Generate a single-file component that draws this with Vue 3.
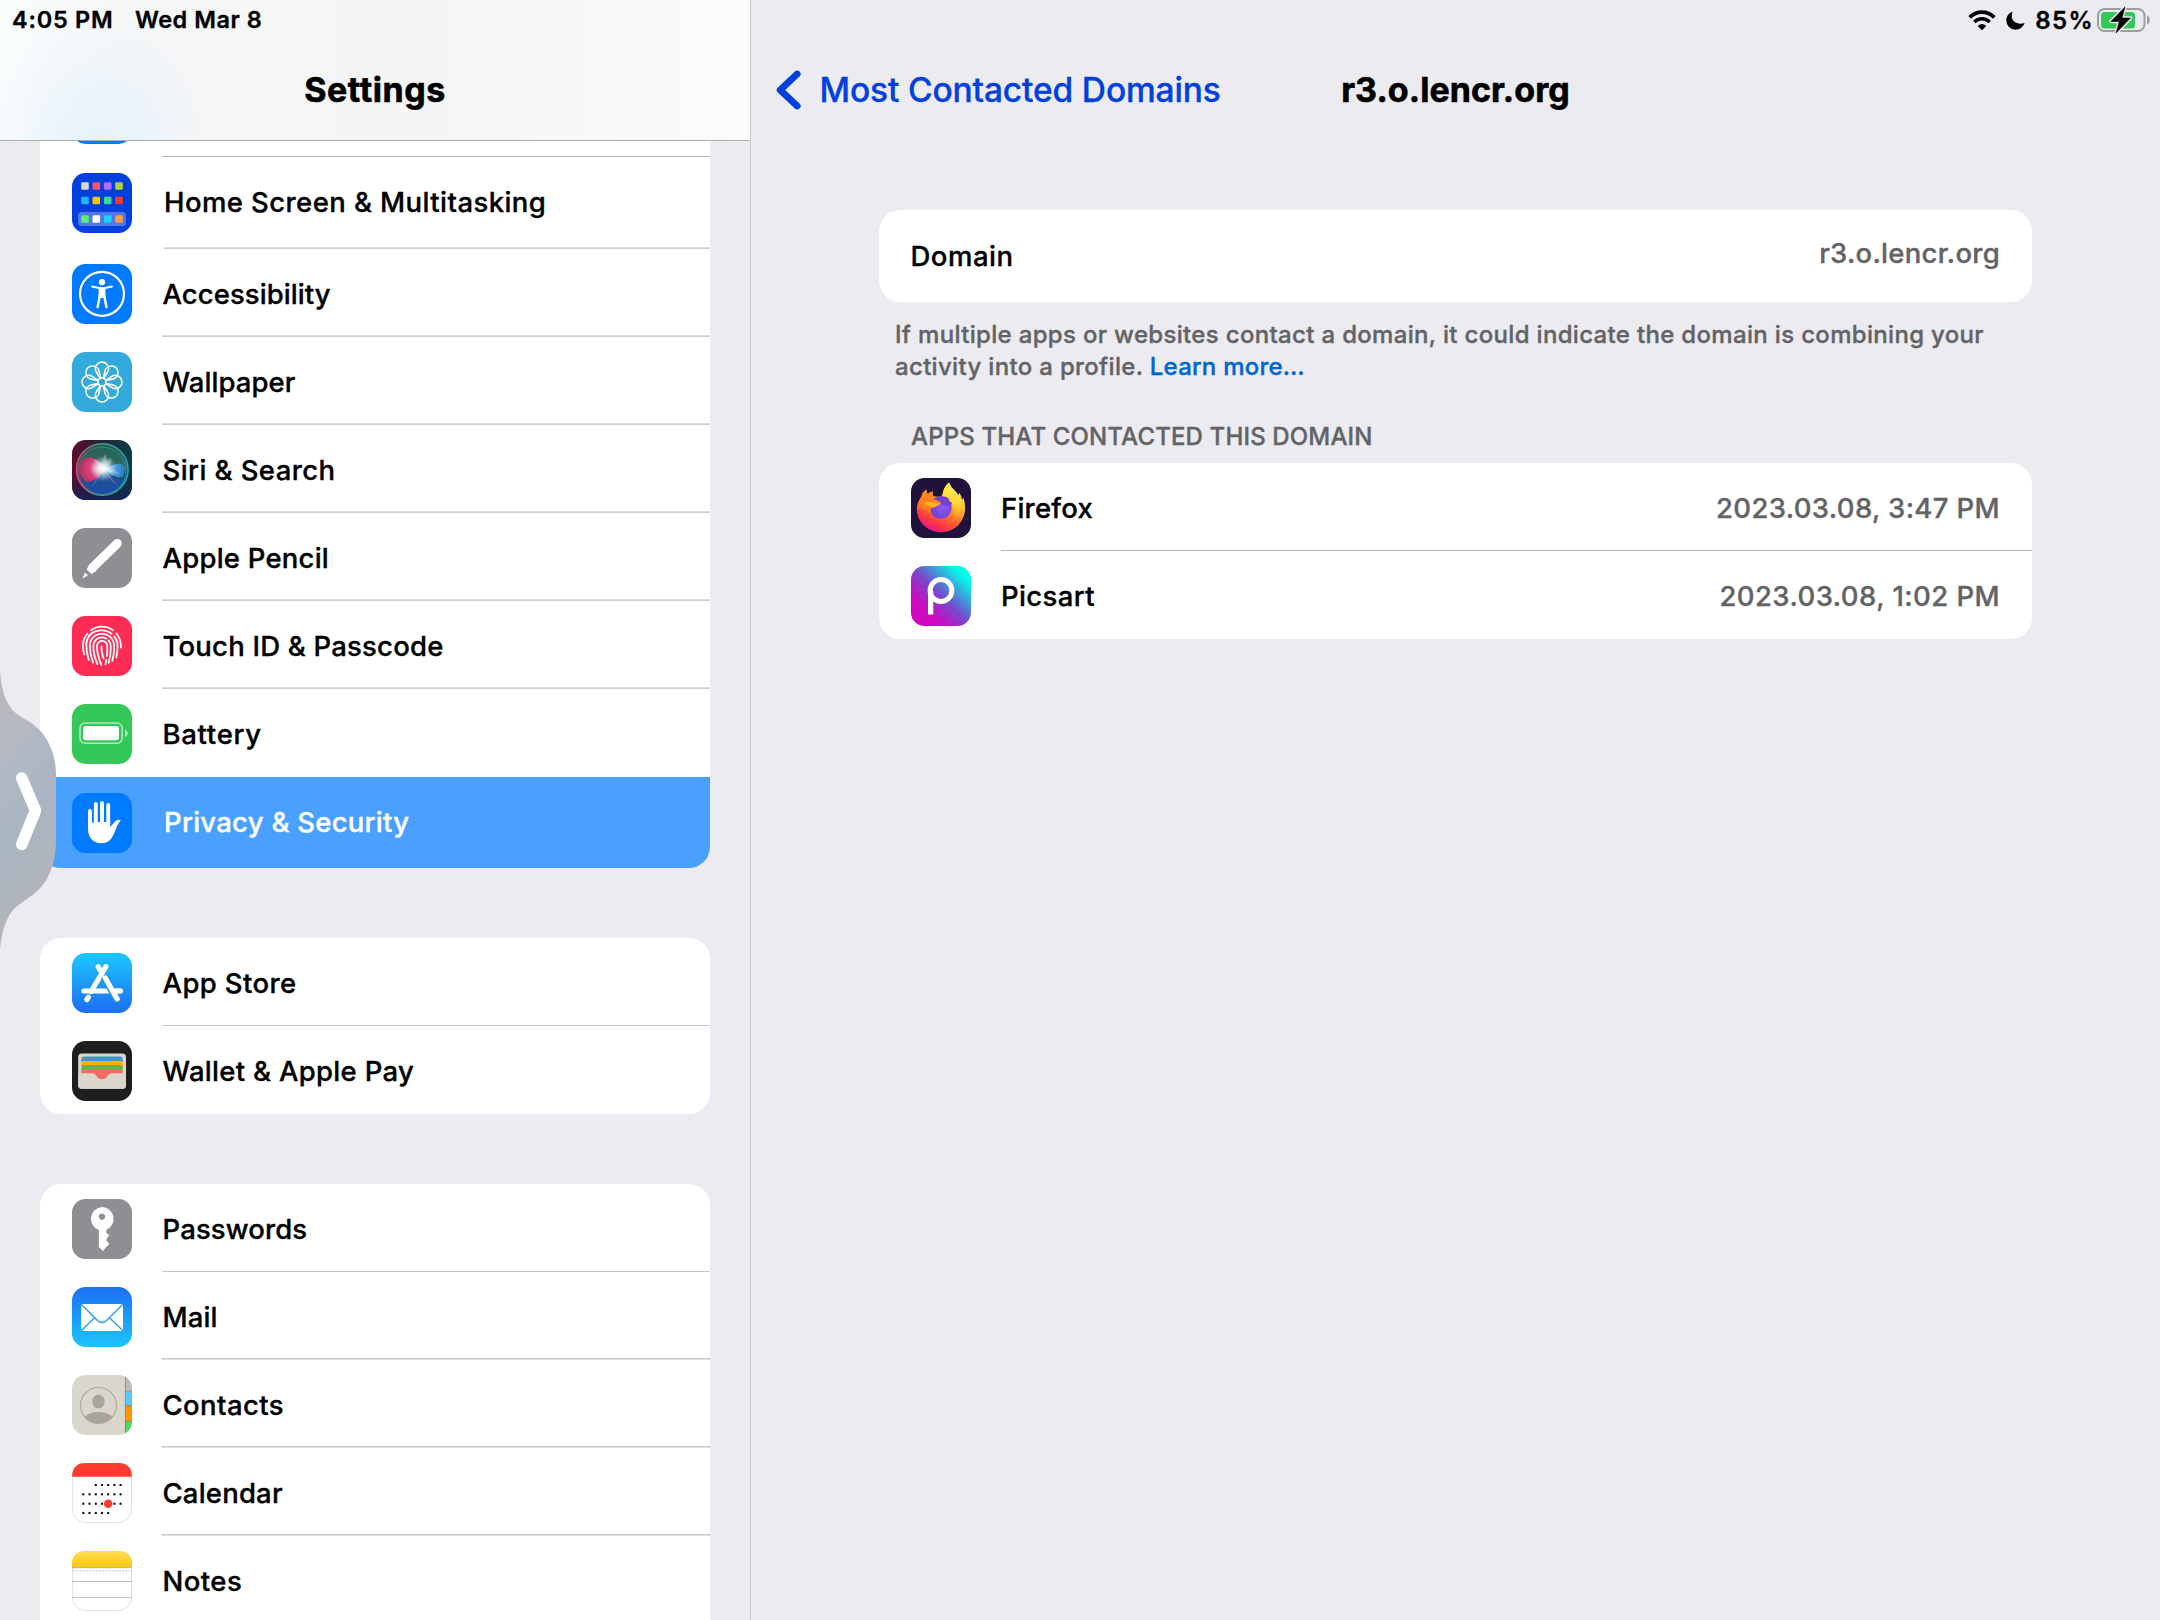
<script setup>
const groups = [
  {
    kind: 'device',
    rows: [
      { icon: 'plain', label: '' },
      { icon: 'home', label: 'Home Screen & Multitasking', track: 0.42, size: 'tall' },
      { icon: 'access', label: 'Accessibility', track: 0.07 },
      { icon: 'wallpaper', label: 'Wallpaper', track: 0.08 },
      { icon: 'siri', label: 'Siri & Search', track: 0.42 },
      { icon: 'pencil', label: 'Apple Pencil', track: 0.22 },
      { icon: 'touch', label: 'Touch ID & Passcode', track: 0.21 },
      { icon: 'battery', label: 'Battery', track: 0.7 },
      { icon: 'hand', label: 'Privacy & Security', track: 0.26, size: 'selected' },
    ],
  },
  {
    kind: 'store',
    rows: [
      { icon: 'appstore', label: 'App Store', track: 0.38 },
      { icon: 'wallet', label: 'Wallet & Apple Pay', track: 0.3 },
    ],
  },
  {
    kind: 'apps',
    rows: [
      { icon: 'key', label: 'Passwords', track: 0.12 },
      { icon: 'mail', label: 'Mail', track: 0.1 },
      { icon: 'contacts', label: 'Contacts', track: 0.42 },
      { icon: 'calendar', label: 'Calendar', track: 0.2 },
      { icon: 'notes', label: 'Notes', track: 0.45 },
    ],
  },
]

const apps = [
  { icon: 'firefox', name: 'Firefox', time: '2023.03.08, 3:47 PM', track: 0.22, timeTrack: 0.36 },
  { icon: 'picsart', name: 'Picsart', time: '2023.03.08, 1:02 PM', track: 0.38, timeTrack: 0.44 },
]

const homeTiles = [
  ['#d9d7cf', 13, 13], ['#ff4f6a', 24.3, 13], ['#b56cff', 35.7, 13], ['#b4d334', 47, 13],
  ['#1cb8fb', 13, 27.5], ['#ffc400', 24.3, 27.5], ['#3ed8a4', 35.7, 27.5], ['#ff372c', 47, 27.5],
  ['#57ef76', 13, 46], ['#ffffff', 24.3, 46], ['#1ad0ff', 35.7, 46], ['#ff9a45', 47, 46],
]

const calendarDots = []
const dotX = [11.3, 17.5, 23.8, 30, 36.2, 42.4, 48.6]
;[[22, 2, 7], [31.3, 0, 7], [40.7, 0, 7], [50, 0, 5]].forEach(([y, from, to]) => {
  for (let i = from; i < to; i++) calendarDots.push([dotX[i], y])
})
</script>

<template>
  <div class="screen">
    <aside class="sidebar">
      <header class="side-head">
        <div class="status-left"><span class="clock">4:05 PM</span><span class="date">Wed Mar 8</span></div>
        <h1 class="side-title">Settings</h1>
      </header>

      <nav class="side-list">
        <ul v-for="g in groups" :key="g.kind" class="group" :class="g.kind">
          <li v-for="r in g.rows" :key="r.icon" class="row" :class="r.size">
            <svg class="icon" viewBox="0 0 60 60">
              <g v-if="r.icon === 'plain'"><rect width="60" height="60" rx="13.5" fill="#007aff" /></g>

              <g v-else-if="r.icon === 'home'">
                <rect width="60" height="60" rx="13.5" fill="#0040dd" />
                <rect x="6" y="39" width="48" height="14" rx="3.5" fill="#5079e7" />
                <rect v-for="t in homeTiles" :key="t.join()" :x="t[1] - 3.8" :y="t[2] - 3.8" width="7.6" height="7.6" rx="1.3" :fill="t[0]" />
              </g>

              <g v-else-if="r.icon === 'access'">
                <rect width="60" height="60" rx="13.5" fill="#007aff" />
                <circle cx="30" cy="29.8" r="22" fill="none" stroke="#fff" stroke-width="2.2" />
                <circle cx="30" cy="18.2" r="3.1" fill="#fff" />
                <path d="M20 22.6L27 24h6l7-1.4" fill="none" stroke="#fff" stroke-width="2" stroke-linecap="round" stroke-linejoin="round" />
                <path d="M26.6 23.6h6.8v8.6h-6.8z" fill="#fff" />
                <path d="M27.8 31.5L25.6 43M32.2 31.5L34.4 43" stroke="#fff" stroke-width="2.4" stroke-linecap="round" />
                <path d="M28 30h4l.8 4h-5.6z" fill="#fff" />
              </g>

              <g v-else-if="r.icon === 'wallpaper'" fill="none" stroke="#fff" stroke-width="1.6" stroke-linejoin="round">
                <rect width="60" height="60" rx="13.5" fill="#34aadc" stroke="none" />
                <path v-for="i in 8" :key="i" d="M28.3 26.3L24.6 20.5A6.6 6.6 0 1 1 35.4 20.5L31.7 26.3" :transform="`rotate(${i * 45} 30 30)`" />
                <circle cx="30" cy="30" r="4" />
              </g>

              <g v-else-if="r.icon === 'siri'">
                <defs>
                  <clipPath id="siri-clip"><rect width="60" height="60" rx="13.5" /></clipPath>
                  <linearGradient id="siri-bg" x1="0" y1="0" x2="1" y2="0"><stop offset="0" stop-color="#5c0e2c" /><stop offset=".45" stop-color="#2a2038" /><stop offset="1" stop-color="#0b3c47" /></linearGradient>
                  <linearGradient id="siri-shade" x1="0" y1="0" x2="0" y2="1"><stop offset=".55" stop-color="#101a48" stop-opacity="0" /><stop offset="1" stop-color="#12245a" stop-opacity=".9" /></linearGradient>
                  <linearGradient id="siri-orb" x1="0" y1="0" x2="0" y2="1"><stop offset="0" stop-color="#1d7a5c" /><stop offset=".48" stop-color="#41807b" /><stop offset=".6" stop-color="#245f94" /><stop offset="1" stop-color="#175cc0" /></linearGradient>
                  <linearGradient id="siri-ring" x1="0" y1="0" x2="1" y2="0"><stop offset="0" stop-color="#dc4a79" /><stop offset=".45" stop-color="#4a9c82" /><stop offset="1" stop-color="#24a6b8" /></linearGradient>
                  <radialGradient id="siri-pink" cx=".75" cy=".45" r=".8"><stop offset="0" stop-color="#f0b5cb" /><stop offset=".5" stop-color="#dc3f78" /><stop offset="1" stop-color="#a92f62" /></radialGradient>
                  <linearGradient id="siri-blue" x1="0" y1="0" x2="1" y2="0"><stop offset="0" stop-color="#9fdcff" /><stop offset="1" stop-color="#1b80da" /></linearGradient>
                  <radialGradient id="siri-glow"><stop offset="0" stop-color="#fff" /><stop offset=".25" stop-color="#f4ffff" stop-opacity=".85" /><stop offset="1" stop-color="#bff3ee" stop-opacity="0" /></radialGradient>
                </defs>
                <g clip-path="url(#siri-clip)">
                  <rect width="60" height="60" fill="url(#siri-bg)" />
                  <rect width="60" height="60" fill="url(#siri-shade)" />
                  <circle cx="30.3" cy="29.5" r="25.3" fill="url(#siri-orb)" fill-opacity=".7" />
                  <path d="M8 44Q20 38 31 30 43 40 53 40 47 54 30.3 54.5 16 54 8 44z" fill="#1d56c4" opacity=".3" />
                  <circle cx="30.3" cy="29.5" r="25.8" fill="none" stroke="url(#siri-ring)" stroke-width="1.5" />
                  <circle cx="30.3" cy="30.8" r="23.6" fill="none" stroke="url(#siri-ring)" stroke-width=".7" opacity=".8" />
                  <path d="M34 29C27 19 19 15.5 13 18.5 5.5 23 6 37 13 41 21 44 28 36 34 29z" fill="url(#siri-pink)" />
                  <path d="M31 29C39 27 44 22.5 49 24 54 26 54 35 49 37 43 38 38 33 31 29z" fill="url(#siri-blue)" opacity=".85" />
                  <path d="M32 30L46 46 39 40zM32 30L20 47 23 41z" fill="#c17fd0" opacity=".6" />
                  <circle cx="31.5" cy="28.5" r="13" fill="url(#siri-glow)" />
                  <path d="M33 13L35 21 40 18 37 27 48 34 35 31 31.5 34 28 30 20 29 27 26 21 19 30 23z" fill="#fff" opacity=".25" />
                </g>
              </g>

              <g v-else-if="r.icon === 'pencil'">
                <rect width="60" height="60" rx="13.5" fill="#8e8e93" />
                <path d="M45.3 15.5L21 39.3" stroke="#fff" stroke-width="9" stroke-linecap="round" />
                <path d="M14.6 41.6L19.5 46 24.5 43 17.5 36z" fill="#fff" />
                <path d="M13.2 44.6L10.2 50.2 16 47.5z" fill="#fff" />
              </g>

              <g v-else-if="r.icon === 'touch'" fill="none" stroke="#fff" stroke-width="1.8" stroke-linecap="round">
                <rect width="60" height="60" rx="13.5" fill="#ff2d55" stroke="none" />
                <path d="M19 14.2C25.5 9.3 34.5 9.3 41 14.2" />
                <path d="M15.5 17.5C12 21.5 10.5 26 11 31.5Q11.2 35.5 12.2 38.5" />
                <path d="M44.5 17.5C47.5 21.5 49.2 26 48.9 31.5" />
                <path d="M16.8 44C14.8 38 14.3 33.5 14.3 29 14.3 20 21 14.3 29.5 14.3 33.5 14.3 37 15.6 39.6 17.8" />
                <path d="M42.3 20.5C44.7 23.5 45.7 27 45.6 31Q45.5 36.5 44.3 41.5" />
                <path d="M21 46.5C18.8 40.5 17.8 35 17.8 30 17.8 22.5 23 17.8 29.8 17.8 37 17.8 42.2 23 42.2 30.5Q42.2 38 40.3 44.8" />
                <path d="M25.2 48C22.5 41 21.3 35.5 21.3 30 21.3 25 25 21.4 30 21.4 31.5 21.4 33 21.8 34.2 22.5" />
                <path d="M36.5 24.3C38 26 38.8 28 38.8 30.5Q38.8 39.5 36.7 46.8" />
                <path d="M29.3 48.8C26.3 41.5 25 36 25 30.2 25 27 27.2 25 30.1 25 33.3 25 35.3 27.5 35.3 31Q35.3 36 34.9 40" />
                <path d="M34.3 43.8L33.5 48.3" />
                <path d="M31.5 42.5C30.3 38.5 29.3 34 29.5 30.5" />
              </g>

              <g v-else-if="r.icon === 'battery'">
                <rect width="60" height="60" rx="13.5" fill="#34c759" />
                <rect x="8" y="19" width="42.2" height="20.2" rx="5" fill="none" stroke="#aee9bd" stroke-width="1.6" />
                <rect x="11" y="22" width="36" height="14.3" rx="2.8" fill="#fff" />
                <path d="M53 25.5Q55.7 26.5 55.7 29.2T53 33z" fill="#aee9bd" />
              </g>

              <g v-else-if="r.icon === 'hand'">
                <rect width="60" height="60" rx="13.5" fill="#007aff" />
                <path d="M18 18v16M23.8 11v20M30 10v20M36.2 12v20" stroke="#fff" stroke-width="3.9" stroke-linecap="round" />
                <path d="M16.05 24V37C16.5 45.5 22 50.2 29 50.2 35.5 50.2 39 47.5 42 40.5L45.5 32Q47 29.5 48.9 27.2 46.5 25.8 43.5 28L38.15 34V28L36.5 29h-6.7l-6 0-5 1z" fill="#fff" />
              </g>

              <g v-else-if="r.icon === 'appstore'">
                <defs><linearGradient id="store-bg" x1="0" y1="0" x2="0" y2="1"><stop offset="0" stop-color="#1bc8fd" /><stop offset="1" stop-color="#1e6ef3" /></linearGradient></defs>
                <rect width="60" height="60" rx="13.5" fill="url(#store-bg)" />
                <g fill="none" stroke="#fff" stroke-width="5.2" stroke-linecap="round">
                  <path d="M33.8 13.8L19 38.5M16.3 44.3L14.9 46.5" />
                  <path d="M26.2 13.8L30 20" />
                  <path d="M11.8 38H48.4" stroke-width="5" />
                </g>
                <path d="M32.3 23.5L45 46" stroke="#1d95f8" stroke-width="8" />
                <path d="M33.3 25L45.2 46" stroke="#fff" stroke-width="5.2" stroke-linecap="round" />
                <path d="M42 38H48.4" stroke="#fff" stroke-width="5" stroke-linecap="round" />
              </g>

              <g v-else-if="r.icon === 'wallet'">
                <rect width="60" height="60" rx="13.5" fill="#1e1e1e" />
                <rect x="6.2" y="12.4" width="47.8" height="35.4" rx="3.5" fill="#d9d6cb" />
                <path d="M9.3 21v-3q0-2.5 2.5-2.5h36.4q2.5 0 2.5 2.5v3z" fill="#3c9ac8" />
                <path d="M9.3 25.5v-3q0-2.5 2.5-2.5h36.4q2.5 0 2.5 2.5v3z" fill="#ffb002" />
                <path d="M9.3 29.5v-3q0-2.5 2.5-2.5h36.4q2.5 0 2.5 2.5v3z" fill="#55bb41" />
                <path d="M9.3 33v-2.5q0-2.5 2.5-2.5h36.4q2.5 0 2.5 2.5V33L36 39H24z" fill="#f26d5f" />
                <path d="M6.2 32.2H19.5C23 32.2 23.5 34 25 36 26.5 37.8 28 38.2 30 38.2S33.5 37.8 35 36C36.5 34 37 32.2 40.5 32.2H54V44.3q0 3.5-3.5 3.5H9.7q-3.5 0-3.5-3.5z" fill="#d9d6cb" />
              </g>

              <g v-else-if="r.icon === 'key'">
                <rect width="60" height="60" rx="13.5" fill="#8e8e93" />
                <path fill-rule="evenodd" d="M30 8A11.8 11.8 0 0 1 34.3 30.7V33.5L37.3 36.6 34.5 39.7V41.5L37.3 45 34.2 48 31 52 26.8 48V30.9A11.8 11.8 0 0 1 30 8zM30 14.4a3.2 3.2 0 1 0 .01 0z" fill="#fff" />
              </g>

              <g v-else-if="r.icon === 'mail'">
                <defs><linearGradient id="mail-bg" x1="0" y1="0" x2="0" y2="1"><stop offset="0" stop-color="#1e6ef3" /><stop offset="1" stop-color="#1bc6fd" /></linearGradient></defs>
                <rect width="60" height="60" rx="13.5" fill="url(#mail-bg)" />
                <rect x="9.2" y="16.9" width="41.8" height="27" rx="1.8" fill="#fff" />
                <path d="M9.5 17.5L25.5 33.5Q30 37.5 34.5 33.5L50.7 17.5M9.5 43.5L22.5 30.7M50.7 43.5L37.6 30.7" fill="none" stroke="#329ff3" stroke-width="1.5" />
              </g>

              <g v-else-if="r.icon === 'contacts'">
                <defs>
                  <clipPath id="contacts-clip"><rect width="60" height="60" rx="13.5" /></clipPath>
                  <clipPath id="face-clip"><circle cx="26.5" cy="30.5" r="17.8" /></clipPath>
                </defs>
                <g clip-path="url(#contacts-clip)">
                  <rect width="60" height="60" fill="#d9d6cc" />
                  <rect x="53" width="7" height="16.5" fill="#bfbab2" />
                  <rect x="53" y="16.5" width="7" height="14.2" fill="#5ac8fa" />
                  <rect x="53" y="30.7" width="7" height="15.8" fill="#ff9500" />
                  <rect x="53" y="46.5" width="7" height="13.5" fill="#4cd964" />
                  <path d="M53.4 0v60M53 16.2h7M53 30.7h7M53 46.4h7" stroke="#6c6a64" stroke-opacity=".6" stroke-width=".8" />
                  <circle cx="26.5" cy="30.5" r="18" fill="none" stroke="#b1aa9f" stroke-width="1.2" />
                  <g clip-path="url(#face-clip)" fill="#aba39d">
                    <ellipse cx="26.5" cy="26.5" rx="6.2" ry="7" />
                    <ellipse cx="26.5" cy="46" rx="15.5" ry="9.2" />
                  </g>
                </g>
              </g>

              <g v-else-if="r.icon === 'calendar'">
                <rect x=".5" y=".5" width="59" height="59" rx="13" fill="#fff" stroke="#e2e2e2" />
                <path d="M0 13.7Q.3 0 13.5 0h33Q59.7 0 60 13.7z" fill="#ff3b30" />
                <rect v-for="d in calendarDots" :key="d.join()" :x="d[0] - 1.05" :y="d[1] - 1.05" width="2.1" height="2.1" fill="#111" />
                <circle cx="36.2" cy="40.8" r="4.3" fill="#ff3b30" />
              </g>

              <g v-else>
                <defs><linearGradient id="notes-top" x1="0" y1="0" x2="0" y2="1"><stop offset="0" stop-color="#fddb57" /><stop offset="1" stop-color="#fdc90c" /></linearGradient></defs>
                <rect x=".5" y=".5" width="59" height="59" rx="13" fill="#fff" stroke="#e2e2e2" />
                <path d="M0 16.2V13.5Q0 0 13.5 0h33Q60 0 60 13.5v2.7z" fill="url(#notes-top)" />
                <path d="M0 16.7h60" stroke="#a9a9a9" stroke-width="1" />
                <path d="M.8 19.8H60" stroke="#d2d2d2" stroke-width="1.6" stroke-dasharray="1.8 1.5" />
                <path d="M0 30.5h60M0 46.4h60" stroke="#bdbdbd" stroke-width="1" />
              </g>
            </svg>
            <span class="label" :style="{ letterSpacing: r.track + 'px' }">{{ r.label }}</span>
          </li>
        </ul>
      </nav>
    </aside>

    <main class="detail">
      <div class="status-right">
        <svg class="wifi" viewBox="0 0 28 21" fill="none" stroke="#000">
          <path d="M1.7 7.4C8.6 .3 19.4 .3 26.3 7.4" stroke-width="3.7" />
          <path d="M6.3 12C10.8 7.8 17.2 7.8 21.7 12" stroke-width="3.5" />
          <path d="M14 20.3L9.7 15.9Q14 12.3 18.3 15.9z" fill="#000" stroke="none" />
        </svg>
        <svg class="moon" viewBox="0 0 19 19"><path d="M6.5 .4C5 5 5.8 8.5 8.3 10.6 11 12.9 14.5 13.2 18.6 12 17 16.2 13.5 18.7 9.5 18.7A9.3 9.3 0 0 1 .3 9.5C.3 5.3 2.7 1.9 6.5 .4z" /></svg>
        <span class="percent">85%</span>
        <svg class="power" viewBox="0 0 54 28">
          <rect x="1" y="3" width="46.5" height="22" rx="6.5" fill="none" stroke="#9d9da0" stroke-width="2" />
          <rect x="4" y="6" width="34" height="16.5" rx="3.5" fill="#34c759" />
          <path d="M50 9.5Q52.8 10.5 52.8 14T50 18.5z" fill="#9d9da0" />
          <path d="M28 1L14 15.5h8.3L19 27 33.5 12H25z" stroke="#ebebf0" stroke-width="3.4" stroke-linejoin="round" />
          <path d="M28 1L14 15.5h8.3L19 27 33.5 12H25z" stroke="#000" stroke-width=".6" stroke-linejoin="round" />
        </svg>
      </div>

      <div class="navbar">
        <div class="back">
          <svg class="chevron" viewBox="0 0 25 40"><path d="M21.2 4L4.2 20 21.2 36" fill="none" stroke="#0040dd" stroke-width="6.8" stroke-linecap="round" stroke-linejoin="round" /></svg>
          <span>Most Contacted Domains</span>
        </div>
        <h2 class="nav-title">r3.o.lencr.org</h2>
      </div>

      <section class="content">
        <div class="card domain">
          <span class="domain-key">Domain</span>
          <span class="domain-value">r3.o.lencr.org</span>
        </div>
        <p class="note">If multiple apps or websites contact a domain, it could indicate the domain is combining your<br />activity into a profile. <a class="more">Learn more…</a></p>
        <h3 class="section-title">APPS THAT CONTACTED THIS DOMAIN</h3>
        <div class="card">
          <div v-for="a in apps" :key="a.name" class="app">
            <svg v-if="a.icon === 'firefox'" class="icon" viewBox="0 0 60 60">
              <defs>
                <linearGradient id="fox-body" x1=".8" y1=".1" x2=".35" y2="1"><stop offset="0" stop-color="#fff04a" /><stop offset=".3" stop-color="#ffbd2e" /><stop offset=".6" stop-color="#ff6a2b" /><stop offset=".82" stop-color="#ff3647" /><stop offset="1" stop-color="#e31587" /></linearGradient>
                <linearGradient id="fox-tail" x1=".5" y1="0" x2=".4" y2="1"><stop offset="0" stop-color="#fff44f" /><stop offset=".5" stop-color="#ffd438" /><stop offset="1" stop-color="#ff8a16" stop-opacity=".3" /></linearGradient>
                <radialGradient id="fox-globe" cx=".6" cy=".5" r=".6"><stop offset="0" stop-color="#9059ff" /><stop offset="1" stop-color="#6a3fc8" /></radialGradient>
                <linearGradient id="fox-head" x1="0" y1="0" x2="0" y2="1"><stop offset="0" stop-color="#ff8a16" /><stop offset="1" stop-color="#ff7a1f" /></linearGradient>
              </defs>
              <rect width="60" height="60" rx="13.5" fill="#20123a" />
              <path d="M10.5 18.5Q11.5 14 15.2 11.5 15.3 14.5 16.8 16.3 18 14.5 21.7 13.3 21.3 16 22 18.3L30 19 31.5 16Q32.5 9 38 4.5 39.5 9 43.5 12.5 46.5 15 47 18.5L48.3 14.8Q50.5 18 51 21.5L52.6 20Q54.5 26 54 32.5C52.5 45.5 42.5 54.2 30 54.2S6.8 45 5.8 32.5C5.5 27 7.5 22 10.5 18.5z" fill="url(#fox-body)" />
              <circle cx="29.8" cy="29.8" r="10.8" fill="url(#fox-globe)" />
              <path d="M22 22Q24 18 31 18 36 18.5 39.5 21.5L36.5 21.8 42.5 26 34 28z" fill="#7542cf" />
              <path d="M32 17Q32.5 9 38 4.5 39.5 9 43.5 12.5 51.5 19 50.5 31 49 41.5 39.5 45 44 39 42.5 31 41.5 24 37.5 20z" fill="url(#fox-tail)" />
              <path d="M10.5 18.5Q11.5 14 15.2 11.5 15.3 14.5 16.8 16.3 18 14.5 21.7 13.3 21 17 22.5 21.2L29 23.6 30 25.6Q26 28.6 22.5 29.4 18.5 30.5 19.5 35 14 31 7 29z" fill="url(#fox-head)" />
              <path d="M12 25.5Q17 22.8 22 24.3 26 24.8 30 25.6 26 28.6 22.5 29.4 18 28.5 12 25.5z" fill="#ffb02e" />
            </svg>
            <svg v-else class="icon" viewBox="0 0 60 60">
              <defs>
                <linearGradient id="pics-bg" x1="0" y1="1" x2="1" y2="0"><stop offset="0" stop-color="#d900b8" /><stop offset=".27" stop-color="#cb0cc0" /><stop offset=".5" stop-color="#7846cc" /><stop offset=".72" stop-color="#2fb6e0" /><stop offset=".85" stop-color="#00fde8" /><stop offset="1" stop-color="#00ffe8" /></linearGradient>
              </defs>
              <rect width="60" height="60" rx="13.5" fill="url(#pics-bg)" />
              <circle cx="30" cy="24.5" r="10.9" fill="none" stroke="#fff" stroke-width="5" />
              <path d="M17 25h5.3v23.6H17z" fill="#fff" />
            </svg>
            <div class="app-line">
              <span class="app-name" :style="{ letterSpacing: a.track + 'px' }">{{ a.name }}</span>
              <span class="app-time" :style="{ letterSpacing: a.timeTrack + 'px' }">{{ a.time }}</span>
            </div>
          </div>
        </div>
      </section>
    </main>

    <svg class="pull-tab" viewBox="0 0 58 290">
      <defs><linearGradient id="tab-bg" x1="0" y1="0" x2=".25" y2="1"><stop offset="0" stop-color="#b9b8ba" /><stop offset=".3" stop-color="#b4b9c3" /><stop offset=".6" stop-color="#a9b5c2" /><stop offset="1" stop-color="#b4b6b9" /></linearGradient></defs>
      <path d="M0 11C2 34 8 48 20 55 32 62 43 69 49 83 54 93 56 102 56 116V178C56 196 53 208 45 221 38 231 30 236 20 243 8 251 2 266 0 289z" fill="url(#tab-bg)" />
      <path d="M21.7 117L35.5 149.5 21.7 183.5" fill="none" stroke="#fff" stroke-width="11.5" stroke-linecap="round" stroke-linejoin="round" />
    </svg>
  </div>
</template>

<style>
body {
  margin: 0;
  background: #ebebf0;
}
</style>

<style scoped>
.screen {
  position: relative;
  display: flex;
  width: 2160px;
  height: 1620px;
  overflow: hidden;
  background: #ebebf0;
  color: #000;
  font: 500 27.5px Inter, "Liberation Sans", sans-serif;
  -webkit-text-stroke: 0.35px currentColor;
}

.sidebar {
  display: flex;
  flex-direction: column;
  box-sizing: border-box;
  width: 751px;
  border-right: 1px solid #c6c6ca;
}

.side-head {
  position: relative;
  z-index: 1;
  flex: none;
  box-sizing: border-box;
  height: 141px;
  border-bottom: 1px solid #adadb0;
  background:
    radial-gradient(110px 130px at 100px 145px, #e5f2fb 0%, rgba(229, 242, 251, 0.5) 50%, rgba(229, 242, 251, 0) 100%),
    linear-gradient(90deg, #f9fcfd 0, #f5f6f7 150px, #f5f5f5 430px, #f8f8f8 600px, #fcfcfc 750px);
}

.status-left {
  display: flex;
  gap: 21.5px;
  height: 38px;
  padding-left: 12px;
  font-size: 23.5px;
  font-weight: 600;
  line-height: 40px;
}

.clock { letter-spacing: 0.75px; }
.date { letter-spacing: 0.5px; }

.side-title {
  margin: 0;
  padding-top: 31px;
  font-size: 34px;
  font-weight: 700;
  letter-spacing: 0.55px;
  line-height: 42px;
  text-align: center;
  -webkit-text-stroke-width: 0.6px;
}

.side-list {
  flex: 1;
  min-height: 0;
  overflow: hidden;
  padding-left: 40px;
}

.group {
  margin: 0 0 70px;
  padding: 0;
  width: 670px;
  overflow: hidden;
  border-radius: 21px;
  background: #fff;
  list-style: none;
}

.device { margin-top: -72px; }
.apps { border-radius: 21px 21px 0 0; }

.row {
  display: flex;
  align-items: flex-start;
  gap: 30.5px;
  box-sizing: border-box;
  height: 88px;
  padding: 15px 0 0 32px;
  background: linear-gradient(#dedede 50%, #cbcbcb 50%) 122px 100% / 100% 2px no-repeat;
}

.device .row:first-child {
  background: linear-gradient(#b3b3b5, #b3b3b5) 122px 100% / 100% 1px no-repeat;
}

.device .row:nth-last-child(2) { background: none; }

.store .row {
  background: linear-gradient(#c9c9cb, #c9c9cb) 122px 100% / 100% 1px no-repeat;
}

.apps .row {
  background: linear-gradient(#c8c8ca 50%, #e2e2e3 50%) 122px 100% / 100% 2px no-repeat;
}

.apps .row:first-child {
  background: linear-gradient(#c6c6c8, #c6c6c8) 122px 100% / 100% 1px no-repeat;
}

.group .row:last-child { background: none; }

.row.tall {
  height: 92px;
  padding-top: 16px;
  background-position-x: 124px;
}

.group .row.selected {
  height: 91px;
  padding-top: 16px;
  background: #4aa0ff;
  color: #fff;
}

.icon {
  flex: none;
  width: 60px;
  height: 60px;
}

.label {
  line-height: 60px;
  white-space: nowrap;
}

.tall .label { padding-left: 1.5px; line-height: 59px; }
.selected .label { padding-left: 1.5px; line-height: 59px; }

.detail {
  flex: 1;
  min-width: 0;
}

.status-right {
  display: flex;
  align-items: center;
  justify-content: flex-end;
  height: 40px;
  padding-right: 9px;
}

.wifi { width: 28px; height: 21px; }
.moon { width: 19px; height: 19px; margin-left: 10px; }
.percent {
  margin: 0 3px 0 10px;
  font-size: 24px;
  font-weight: 600;
  letter-spacing: 1.4px;
}
.power { width: 54px; height: 28px; }

.navbar {
  display: grid;
  grid-template-columns: 1fr auto 1fr;
  align-items: center;
  height: 100px;
  padding: 0 0 0 25px;
}

.back {
  display: flex;
  align-items: center;
  gap: 18.5px;
  color: #0040dd;
  font-size: 33.5px;
  letter-spacing: -0.14px;
  white-space: nowrap;
}

.chevron { width: 25px; height: 40px; }

.nav-title {
  margin: -2px 0 0 -25px;
  font-size: 34px;
  font-weight: 700;
  letter-spacing: 0.07px;
  -webkit-text-stroke-width: 0.6px;
}

.content {
  width: 1153px;
  margin: 70px 0 0 128px;
}

.card {
  overflow: hidden;
  border-radius: 21px;
  background: #fff;
}

.domain {
  display: flex;
  justify-content: space-between;
  box-sizing: border-box;
  height: 92px;
  padding: 0 32px 0 31.5px;
  line-height: 92px;
}

.domain-key { letter-spacing: 0.5px; }
.domain-value {
  color: #636366;
  letter-spacing: 0.27px;
  line-height: 87px;
}

.note {
  margin: 17px 0 0;
  padding-left: 16px;
  color: #636366;
  font-size: 24px;
  letter-spacing: 0.324px;
  line-height: 32px;
  white-space: nowrap;
}

.more {
  color: #0064d2;
  letter-spacing: 0.23px;
}

.section-title {
  margin: 0;
  padding: 38px 0 10px 32px;
  color: #636366;
  font-size: 24px;
  font-weight: 500;
  letter-spacing: 0.15px;
  line-height: 32px;
}

.app {
  display: flex;
  align-items: flex-start;
  gap: 30px;
  height: 73px;
  padding: 15px 0 0 32px;
}

.app-line {
  display: flex;
  flex: 1;
  justify-content: space-between;
  box-sizing: border-box;
  height: 73px;
  padding-right: 32px;
  border-bottom: 1px solid #b6b6b9;
  line-height: 60px;
}

.app:last-child .app-line { border-bottom: 0; }

.app-time { color: #636366; }

.pull-tab {
  position: absolute;
  top: 661px;
  left: 0;
  z-index: 2;
  width: 58px;
  height: 290px;
}
</style>
